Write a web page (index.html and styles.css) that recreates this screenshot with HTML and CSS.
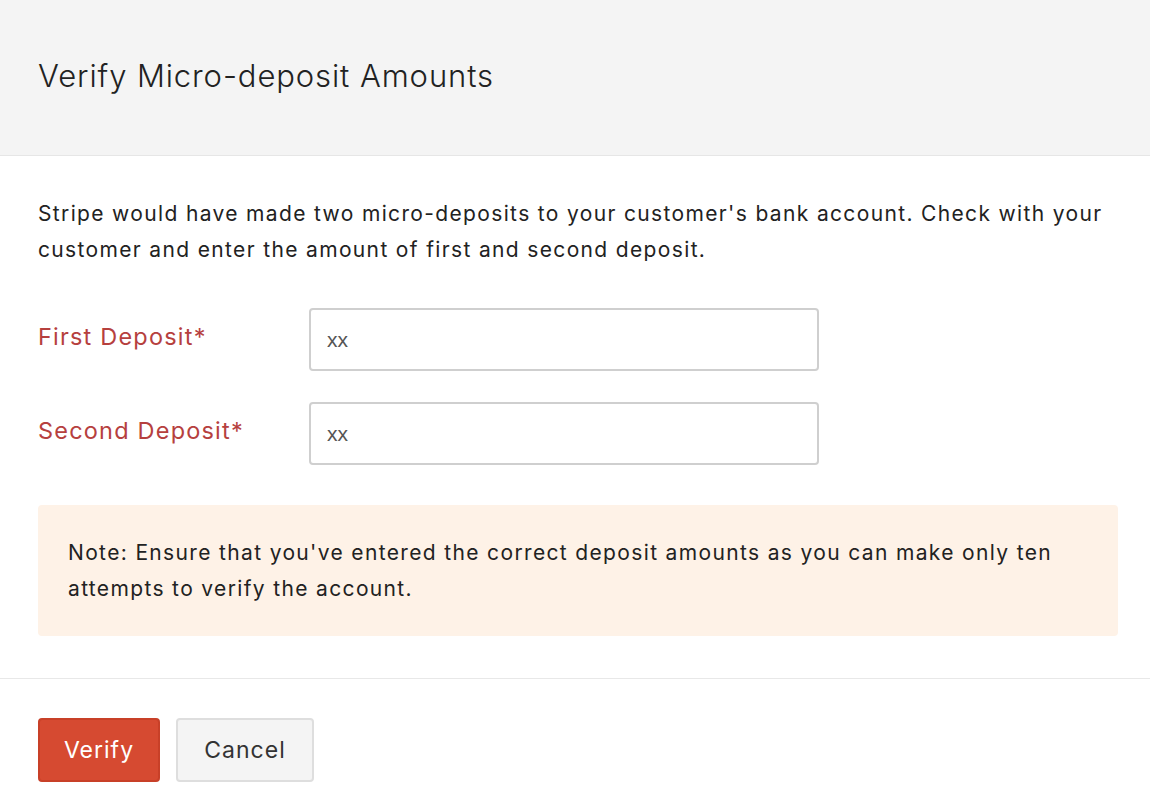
FILE: index.html
```html
<!DOCTYPE html>
<html>
<head>
<meta charset="utf-8">
<link rel="stylesheet" href="styles.css">
</head>
<body>
<div class="modal">
  <header class="modal-header">
    <h1 class="title">Verify Micro-deposit Amounts</h1>
  </header>
  <section class="modal-body">
    <p class="intro">Stripe would have made two micro-deposits to your customer's bank account. Check with your customer and enter the amount of first and second deposit.</p>
    <div class="form-row">
      <label class="label">First Deposit*</label>
      <input class="input" type="text" value="xx">
    </div>
    <div class="form-row">
      <label class="label">Second Deposit*</label>
      <input class="input" type="text" value="xx">
    </div>
    <div class="note">Note: Ensure that you've entered the correct deposit amounts as you can make only ten attempts to verify the account.</div>
  </section>
  <footer class="modal-footer">
    <button class="btn btn-primary">Verify</button>
    <button class="btn btn-secondary">Cancel</button>
  </footer>
</div>
</body>
</html>
```
FILE: styles.css
```css
* { box-sizing: border-box; }
html, body { margin: 0; padding: 0; background: #fff; }
body {
  font-family: "Inter", "Open Sans", sans-serif;
  color: #222;
  width: 1150px;
  height: 800px;
  overflow: hidden;
}
.modal-header {
  background: #f4f4f4;
  height: 156px;
  border-bottom: 1px solid #e6e6e6;
  display: flex;
  align-items: center;
  padding: 0 38px 4px;
}
.title {
  margin: 0;
  font-weight: 300;
  font-size: 31px;
  letter-spacing: 0.9px;
  color: #222;
}
.modal-body {
  padding: 40px 32px 42px 38px;
  border-bottom: 1px solid #e8e8e8;
}
.intro {
  margin: 0 0 40px;
  font-size: 21px;
  letter-spacing: 1.35px;
  line-height: 36px;
  color: #222;
}
.form-row {
  display: flex;
  align-items: flex-start;
  margin-bottom: 31px;
}
.label {
  width: 271px;
  font-size: 23.5px;
  letter-spacing: 1.2px;
  color: #b6403e;
  padding-top: 14px;
}
.input {
  width: 510px;
  height: 63px;
  border: 2px solid #cfcfcf;
  border-radius: 4px;
  padding: 0 16px;
  font-family: "Liberation Sans", Arial, sans-serif;
  font-size: 21px;
  color: #555;
  outline: none;
}
.note {
  margin-top: 40px;
  background: #fef2e7;
  border-radius: 4px;
  padding: 30px 30px 29px;
  font-size: 21px;
  letter-spacing: 1.35px;
  line-height: 36px;
  color: #222;
}
.modal-footer {
  display: flex;
  gap: 16px;
  padding: 39px 38px 38px;
}
.btn {
  height: 64px;
  border-radius: 4px;
  font-family: "Inter", sans-serif;
  font-size: 23px;
  letter-spacing: 1px;
  cursor: pointer;
}
.btn-primary {
  width: 122px;
  background: #d64a31;
  border: 2px solid #c84028;
  color: #fff;
}
.btn-secondary {
  width: 138px;
  background: #f4f4f4;
  border: 2px solid #dedede;
  color: #333;
}
```
